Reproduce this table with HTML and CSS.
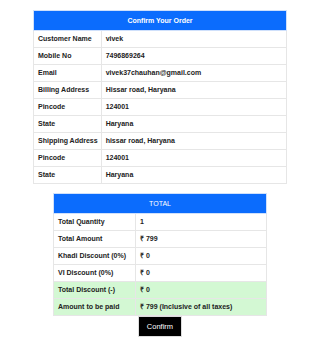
FILE: index.html
```html
<!DOCTYPE html>
<html>
<head>
<meta charset="utf-8">
<link rel="stylesheet" href="styles.css">
</head>
<body>
<div class="page">
  <table class="order">
    <thead>
      <tr><th colspan="2">Confirm Your Order</th></tr>
    </thead>
    <tbody>
      <tr><td class="label">Customer Name</td><td>vivek</td></tr>
      <tr><td class="label">Mobile No</td><td>7496869264</td></tr>
      <tr><td class="label">Email</td><td>vivek37chauhan@gmail.com</td></tr>
      <tr><td class="label">Billing Address</td><td>Hissar road, Haryana</td></tr>
      <tr><td class="label">Pincode</td><td>124001</td></tr>
      <tr><td class="label">State</td><td>Haryana</td></tr>
      <tr><td class="label">Shipping Address</td><td>hissar road, Haryana</td></tr>
      <tr><td class="label">Pincode</td><td>124001</td></tr>
      <tr><td class="label">State</td><td>Haryana</td></tr>
    </tbody>
  </table>

  <table class="total">
    <thead>
      <tr><th colspan="2" class="thin">TOTAL</th></tr>
    </thead>
    <tbody>
      <tr><td class="label2">Total Quantity</td><td>1</td></tr>
      <tr><td class="label2">Total Amount</td><td>₹ 799</td></tr>
      <tr><td class="label2">Khadi Discount (0%)</td><td>₹ 0</td></tr>
      <tr><td class="label2">VI Discount (0%)</td><td>₹ 0</td></tr>
      <tr class="green"><td class="label2">Total Discount (-)</td><td>₹ 0</td></tr>
      <tr class="green"><td class="label2">Amount to be paid</td><td>₹ 799 (Inclusive of all taxes)</td></tr>
    </tbody>
  </table>

  <div class="actions">
    <button class="confirm">Confirm</button>
  </div>
</div>
</body>
</html>
```

FILE: styles.css
```css
html, body {
  margin: 0;
  padding: 0;
  background: #ffffff;
}

body {
  margin-left: 8px;
  font-family: "Liberation Sans", Arial, sans-serif;
  color: #222222;
}

.page {
  padding-top: 10px;
}

table {
  border-collapse: collapse;
  margin: 0 auto;
  font-size: 7px;
  font-weight: 700;
}

.order {
  width: 254px;
}

.total {
  width: 214px;
  margin-top: 9px;
}

th {
  background: #0b6cfd;
  color: #ffffff;
  line-height: 19px;
  padding: 0;
  font-weight: 700;
  text-align: center;
  border: 1px solid #cfe0fb;
}

th.thin {
  font-weight: 400;
}

td {
  line-height: 16px;
  padding: 0 3px 0 4px;
  border: 1px solid #e6e6e6;
  text-align: left;
  vertical-align: middle;
  white-space: nowrap;
}

td.label {
  width: 58px;
}

td.label2 {
  width: 74px;
}

tr.green td {
  background: #d3f8d3;
}

.actions {
  display: flex;
  justify-content: center;
}

.confirm {
  margin-top: 0;
  width: 44px;
  height: 21px;
  padding: 0;
  background: #000000;
  color: #ffffff;
  border: 1px solid #dddddd;
  font-family: "Liberation Sans", Arial, sans-serif;
  font-size: 7.5px;
}
```
